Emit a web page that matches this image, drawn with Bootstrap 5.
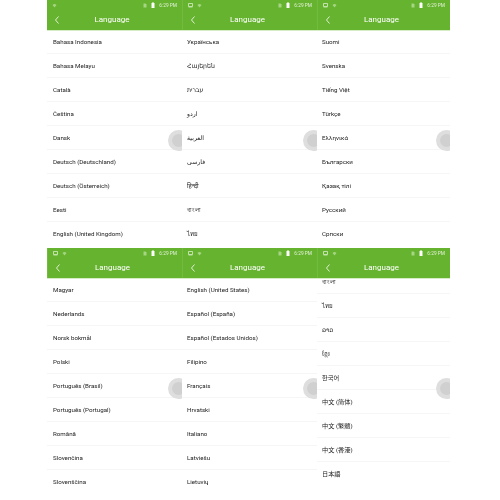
<!DOCTYPE html>
<html lang="en">
<head>
<meta charset="utf-8">
<title>Language</title>
<link href="https://cdn.jsdelivr.net/npm/bootstrap@5.3.0/dist/css/bootstrap.min.css" rel="stylesheet">
<style>
html,body{margin:0;background:#fff;overflow:hidden}
body{font-family:Roboto,"Noto Sans","DejaVu Sans","Noto Sans CJK SC",sans-serif}
.shots{display:grid;grid-template-columns:135px 135px 133px;grid-template-rows:248px 252px;width:403px;height:500px;margin-left:47px;filter:blur(.25px)}
.phone{position:relative;overflow:hidden}
.appbar{position:relative;z-index:2;height:30px;background:#66b32f;color:#fff;box-shadow:0 1px 0 #d6ecc6}
.phone+.phone .appbar{border-left:1px solid #74ba41}
.statusline{height:10px;padding:0 5px 0 5px;color:#e3f2d8;font-size:4.8px;line-height:9px}
.statusline svg{display:block}
.titleline{height:20px;position:relative;font-size:8px;line-height:20px;padding-right:5px;color:#fff}
.titleline svg{position:absolute;left:8px;top:6px}
.langrows.scrolled{margin-top:-8px}
.langrow{height:24px;padding:1px 0 0 6px;border:0;border-bottom:1px solid #f6f6f6;font-size:6.2px;line-height:22px;color:#222;background:transparent;white-space:nowrap}
.phone:nth-child(3n+2) .langrow{padding-left:5px}
.phone:nth-child(3n) .langrow{padding-left:5px}
.floatball{position:absolute;right:-7px;top:130px;width:21px;height:21px;border-radius:50%;background:#dedede;z-index:1}
.floatball::after{content:"";position:absolute;inset:4px;border-radius:50%;background:#d0d0d0}
</style>
</head>
<body>
<div class="shots">

<section class="phone">
  <header class="appbar">
    <div class="statusline d-flex align-items-center gap-1"><svg width="5" height="5" viewBox="0 0 10 10"><path d="M1 4a6 6 0 0 1 8 0L5 9z" fill="#a5d585"/></svg><span class="ms-auto d-flex align-items-center gap-1"><svg width="4" height="5" viewBox="0 0 8 10"><path d="M1 1h4l2 2v6H1z" fill="#a5d585"/></svg><svg width="4" height="6" viewBox="0 0 8 12"><path d="M1 2h2V0h2v2h2v10H1z" fill="#fff"/></svg><span>6:29 PM</span></span></div>
    <div class="titleline text-center">Language<svg width="4" height="8" viewBox="0 0 4 8"><path d="M3.500.500.500 4l3 3.500" fill="none" stroke="#fff" stroke-width=".8"/></svg></div>
  </header>
  <ul class="list-group list-group-flush langrows">
    <li class="list-group-item langrow">Bahasa Indonesia</li>
    <li class="list-group-item langrow">Bahasa Melayu</li>
    <li class="list-group-item langrow">Català</li>
    <li class="list-group-item langrow">Čeština</li>
    <li class="list-group-item langrow">Dansk</li>
    <li class="list-group-item langrow">Deutsch (Deutschland)</li>
    <li class="list-group-item langrow">Deutsch (Österreich)</li>
    <li class="list-group-item langrow">Eesti</li>
    <li class="list-group-item langrow">English (United Kingdom)</li>
  </ul>
  <div class="floatball"></div>
</section>

<section class="phone">
  <header class="appbar">
    <div class="statusline d-flex align-items-center gap-1"><svg width="5" height="5" viewBox="0 0 10 10"><path d="M1 1h8v6H1z" fill="none" stroke="#dff0d2" stroke-width="1.500"/><path d="M1 8.500h8" stroke="#dff0d2"/></svg><svg width="5" height="5" viewBox="0 0 10 10"><path d="M1 4a6 6 0 0 1 8 0L5 9z" fill="#a5d585"/></svg><span class="ms-auto d-flex align-items-center gap-1"><svg width="4" height="5" viewBox="0 0 8 10"><path d="M1 1h4l2 2v6H1z" fill="#a5d585"/></svg><svg width="4" height="6" viewBox="0 0 8 12"><path d="M1 2h2V0h2v2h2v10H1z" fill="#fff"/></svg><span>6:29 PM</span></span></div>
    <div class="titleline text-center">Language<svg width="4" height="8" viewBox="0 0 4 8"><path d="M3.500.500.500 4l3 3.500" fill="none" stroke="#fff" stroke-width=".8"/></svg></div>
  </header>
  <ul class="list-group list-group-flush langrows">
    <li class="list-group-item langrow">Українська</li>
    <li class="list-group-item langrow">Հայերեն</li>
    <li class="list-group-item langrow">עברית</li>
    <li class="list-group-item langrow">اردو</li>
    <li class="list-group-item langrow">العربية</li>
    <li class="list-group-item langrow">فارسی</li>
    <li class="list-group-item langrow">हिन्दी</li>
    <li class="list-group-item langrow">বাংলা</li>
    <li class="list-group-item langrow">ไทย</li>
  </ul>
  <div class="floatball"></div>
</section>

<section class="phone">
  <header class="appbar">
    <div class="statusline d-flex align-items-center gap-1"><svg width="5" height="5" viewBox="0 0 10 10"><path d="M1 1h8v6H1z" fill="none" stroke="#dff0d2" stroke-width="1.500"/><path d="M1 8.500h8" stroke="#dff0d2"/></svg><svg width="5" height="5" viewBox="0 0 10 10"><path d="M1 4a6 6 0 0 1 8 0L5 9z" fill="#a5d585"/></svg><span class="ms-auto d-flex align-items-center gap-1"><svg width="4" height="5" viewBox="0 0 8 10"><path d="M1 1h4l2 2v6H1z" fill="#a5d585"/></svg><svg width="4" height="6" viewBox="0 0 8 12"><path d="M1 2h2V0h2v2h2v10H1z" fill="#fff"/></svg><span>6:29 PM</span></span></div>
    <div class="titleline text-center">Language<svg width="4" height="8" viewBox="0 0 4 8"><path d="M3.500.500.500 4l3 3.500" fill="none" stroke="#fff" stroke-width=".8"/></svg></div>
  </header>
  <ul class="list-group list-group-flush langrows">
    <li class="list-group-item langrow">Suomi</li>
    <li class="list-group-item langrow">Svenska</li>
    <li class="list-group-item langrow">Tiếng Việt</li>
    <li class="list-group-item langrow">Türkçe</li>
    <li class="list-group-item langrow">Ελληνικά</li>
    <li class="list-group-item langrow">Български</li>
    <li class="list-group-item langrow">Қазақ тілі</li>
    <li class="list-group-item langrow">Русский</li>
    <li class="list-group-item langrow">Српски</li>
  </ul>
  <div class="floatball"></div>
</section>

<section class="phone">
  <header class="appbar">
    <div class="statusline d-flex align-items-center gap-1"><svg width="5" height="5" viewBox="0 0 10 10"><path d="M1 1h8v6H1z" fill="none" stroke="#dff0d2" stroke-width="1.500"/><path d="M1 8.500h8" stroke="#dff0d2"/></svg><svg width="5" height="5" viewBox="0 0 10 10"><path d="M1 4a6 6 0 0 1 8 0L5 9z" fill="#a5d585"/></svg><span class="ms-auto d-flex align-items-center gap-1"><svg width="4" height="5" viewBox="0 0 8 10"><path d="M1 1h4l2 2v6H1z" fill="#a5d585"/></svg><svg width="4" height="6" viewBox="0 0 8 12"><path d="M1 2h2V0h2v2h2v10H1z" fill="#fff"/></svg><span>6:29 PM</span></span></div>
    <div class="titleline text-center">Language<svg width="4" height="8" viewBox="0 0 4 8"><path d="M3.500.500.500 4l3 3.500" fill="none" stroke="#fff" stroke-width=".8"/></svg></div>
  </header>
  <ul class="list-group list-group-flush langrows">
    <li class="list-group-item langrow">Magyar</li>
    <li class="list-group-item langrow">Nederlands</li>
    <li class="list-group-item langrow">Norsk bokmål</li>
    <li class="list-group-item langrow">Polski</li>
    <li class="list-group-item langrow">Português (Brasil)</li>
    <li class="list-group-item langrow">Português (Portugal)</li>
    <li class="list-group-item langrow">Română</li>
    <li class="list-group-item langrow">Slovenčina</li>
    <li class="list-group-item langrow">Slovenščina</li>
  </ul>
  <div class="floatball"></div>
</section>

<section class="phone">
  <header class="appbar">
    <div class="statusline d-flex align-items-center gap-1"><svg width="5" height="5" viewBox="0 0 10 10"><path d="M1 1h8v6H1z" fill="none" stroke="#dff0d2" stroke-width="1.500"/><path d="M1 8.500h8" stroke="#dff0d2"/></svg><svg width="5" height="5" viewBox="0 0 10 10"><path d="M1 4a6 6 0 0 1 8 0L5 9z" fill="#a5d585"/></svg><span class="ms-auto d-flex align-items-center gap-1"><svg width="4" height="5" viewBox="0 0 8 10"><path d="M1 1h4l2 2v6H1z" fill="#a5d585"/></svg><svg width="4" height="6" viewBox="0 0 8 12"><path d="M1 2h2V0h2v2h2v10H1z" fill="#fff"/></svg><span>6:29 PM</span></span></div>
    <div class="titleline text-center">Language<svg width="4" height="8" viewBox="0 0 4 8"><path d="M3.500.500.500 4l3 3.500" fill="none" stroke="#fff" stroke-width=".8"/></svg></div>
  </header>
  <ul class="list-group list-group-flush langrows">
    <li class="list-group-item langrow">English (United States)</li>
    <li class="list-group-item langrow">Español (España)</li>
    <li class="list-group-item langrow">Español (Estados Unidos)</li>
    <li class="list-group-item langrow">Filipino</li>
    <li class="list-group-item langrow">Français</li>
    <li class="list-group-item langrow">Hrvatski</li>
    <li class="list-group-item langrow">Italiano</li>
    <li class="list-group-item langrow">Latviešu</li>
    <li class="list-group-item langrow">Lietuvių</li>
  </ul>
  <div class="floatball"></div>
</section>

<section class="phone">
  <header class="appbar">
    <div class="statusline d-flex align-items-center gap-1"><svg width="5" height="5" viewBox="0 0 10 10"><path d="M1 1h8v6H1z" fill="none" stroke="#dff0d2" stroke-width="1.500"/><path d="M1 8.500h8" stroke="#dff0d2"/></svg><svg width="5" height="5" viewBox="0 0 10 10"><path d="M1 4a6 6 0 0 1 8 0L5 9z" fill="#a5d585"/></svg><span class="ms-auto d-flex align-items-center gap-1"><svg width="4" height="5" viewBox="0 0 8 10"><path d="M1 1h4l2 2v6H1z" fill="#a5d585"/></svg><svg width="4" height="6" viewBox="0 0 8 12"><path d="M1 2h2V0h2v2h2v10H1z" fill="#fff"/></svg><span>6:29 PM</span></span></div>
    <div class="titleline text-center">Language<svg width="4" height="8" viewBox="0 0 4 8"><path d="M3.500.500.500 4l3 3.500" fill="none" stroke="#fff" stroke-width=".8"/></svg></div>
  </header>
  <ul class="list-group list-group-flush langrows scrolled">
    <li class="list-group-item langrow">বাংলা</li>
    <li class="list-group-item langrow">ไทย</li>
    <li class="list-group-item langrow">ລາວ</li>
    <li class="list-group-item langrow">ខ្មែរ</li>
    <li class="list-group-item langrow" lang="ko">한국어</li>
    <li class="list-group-item langrow" lang="zh-CN">中文 (简体)</li>
    <li class="list-group-item langrow" lang="zh-TW">中文 (繁體)</li>
    <li class="list-group-item langrow" lang="zh-HK">中文 (香港)</li>
    <li class="list-group-item langrow border-0" lang="ja">日本語</li>
  </ul>
  <div class="floatball"></div>
</section>

</div>
<script src="https://cdn.jsdelivr.net/npm/bootstrap@5.3.0/dist/js/bootstrap.bundle.min.js"></script>
</body>
</html>
